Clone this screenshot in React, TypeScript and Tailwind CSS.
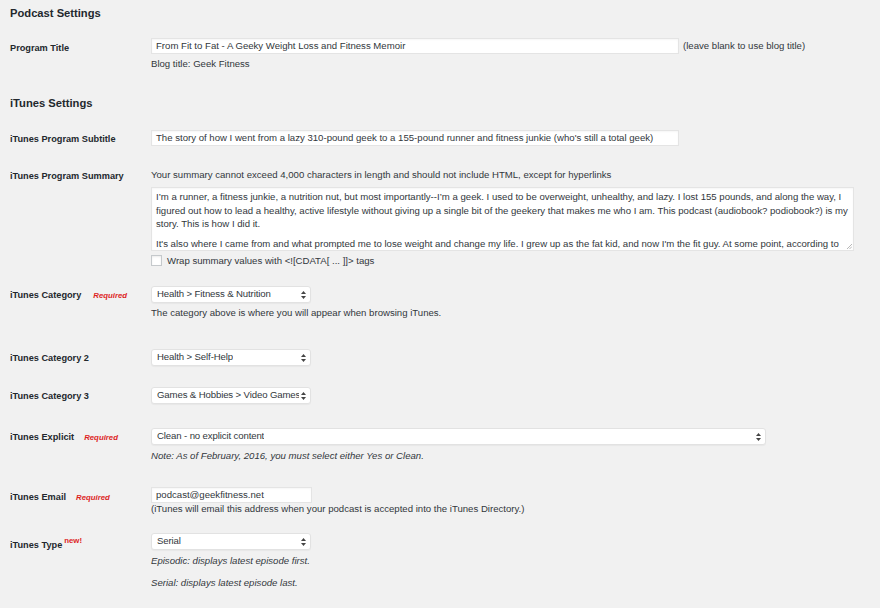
import React from 'react';

const font = { fontFamily: '"Liberation Sans", Arial, sans-serif' };

function Arrows() {
  return (
    <svg width="5" height="8" viewBox="0 0 5 8" className="shrink-0">
      <path d="M2.5 0 L5 3 L0 3 Z" fill="#444" />
      <path d="M2.5 8 L5 5 L0 5 Z" fill="#444" />
    </svg>
  );
}

function Select({ value, width }: { value: string; width: string }) {
  return (
    <div
      className={`${width} h-[17px] bg-white border border-[#e2e2e2] rounded-[3px] shadow-[0_1px_1px_rgba(0,0,0,0.04)] flex items-center justify-between gap-[2px] pl-[5px] pr-[4px] text-[9.6px] tracking-[-0.12px] text-[#32373c]`}
    >
      <span className="whitespace-nowrap overflow-hidden">{value}</span>
      <Arrows />
    </div>
  );
}

function TextInput({ value, width }: { value: string; width: string }) {
  return (
    <div
      className={`${width} h-[16px] bg-white border border-[#e4e4e4] shadow-[inset_0_1px_2px_rgba(0,0,0,0.04)] flex items-center px-[4px] text-[9.6px] text-[#32373c] whitespace-nowrap overflow-hidden`}
    >
      {value}
    </div>
  );
}

function Required() {
  return <span className="text-[#dd1f1f] italic font-bold text-[7.8px]">Required</span>;
}

function Row({
  label,
  extra,
  labelPt,
  mt,
  children,
}: {
  label: string;
  extra?: React.ReactNode;
  labelPt: string;
  mt: string;
  children: React.ReactNode;
}) {
  return (
    <div className={`flex ${mt}`}>
      <div className={`w-[151px] shrink-0 pl-[10px] ${labelPt} text-[9.2px] leading-[12px] font-bold text-[#23282d] flex items-baseline`}>
        <span className="whitespace-nowrap">{label}</span>
        {extra}
      </div>
      <div className="flex flex-col">{children}</div>
    </div>
  );
}

function Help({ children, italic, mt }: { children: React.ReactNode; italic?: boolean; mt?: string }) {
  return (
    <div className={`h-[12px] text-[9.6px] leading-[12px] text-[#32373c] whitespace-nowrap ${italic ? 'italic' : ''} ${mt ?? ''}`}>
      {children}
    </div>
  );
}

export default function App() {
  return (
    <div className="w-[880px] h-[608px] bg-[#f1f1f1] overflow-hidden text-[#23282d]" style={font}>
      <div className="h-[26px] flex items-center pl-[10px] text-[11.2px] font-bold">Podcast Settings</div>

      <Row label="Program Title" labelPt="pt-[4px]" mt="mt-[12px]">
        <div className="flex items-center h-[16px]">
          <TextInput value="From Fit to Fat - A Geeky Weight Loss and Fitness Memoir" width="w-[528px]" />
          <span className="ml-[4px] text-[9.6px] text-[#32373c] whitespace-nowrap">(leave blank to use blog title)</span>
        </div>
        <Help mt="mt-[4px]">Blog title: Geek Fitness</Help>
      </Row>

      <div className="mt-[26px] h-[14px] flex items-center pl-[10px] text-[11.2px] font-bold">iTunes Settings</div>

      <Row label="iTunes Program Subtitle" labelPt="pt-[3px]" mt="mt-[20px]">
        <TextInput
          value="The story of how I went from a lazy 310-pound geek to a 155-pound runner and fitness junkie (who's still a total geek)"
          width="w-[528px]"
        />
      </Row>

      <Row label="iTunes Program Summary" labelPt="pt-[1px]" mt="mt-[23px]">
        <Help>Your summary cannot exceed 4,000 characters in length and should not include HTML, except for hyperlinks</Help>
        <div className="relative mt-[6px] w-[703px] h-[64px] bg-white border border-[#e4e4e4] shadow-[inset_0_1px_2px_rgba(0,0,0,0.04)] overflow-hidden px-[4px] pt-[2px] text-[9.6px] leading-[13.5px] text-[#32373c]">
          <div className="whitespace-nowrap">I’m a runner, a fitness junkie, a nutrition nut, but most importantly--I’m a geek. I used to be overweight, unhealthy, and lazy. I lost 155 pounds, and along the way, I</div>
          <div className="whitespace-nowrap">figured out how to lead a healthy, active lifestyle without giving up a single bit of the geekery that makes me who I am. This podcast (audiobook? podiobook?) is my</div>
          <div className="whitespace-nowrap">story. This is how I did it.</div>
          <div className="h-[6.5px]" />
          <div className="whitespace-nowrap">It's also where I came from and what prompted me to lose weight and change my life. I grew up as the fat kid, and now I'm the fit guy. At some point, according to</div>
          <svg width="6" height="6" viewBox="0 0 6 6" className="absolute right-[1px] bottom-[1px]">
            <path d="M6 1 L1 6 M6 3.5 L3.5 6" stroke="#999" strokeWidth="0.7" />
          </svg>
        </div>
        <div className="mt-[4px] h-[11px] flex items-center">
          <div className="w-[11px] h-[11px] shrink-0 bg-white border border-[#c5c9cc] shadow-[inset_0_1px_2px_rgba(0,0,0,0.08)]" />
          <span className="ml-[5px] text-[9.6px] leading-[11px] text-[#32373c] whitespace-nowrap">{'Wrap summary values with <![CDATA[ ... ]]> tags'}</span>
        </div>
      </Row>

      <Row
        label="iTunes Category"
        extra={<span className="ml-[12px]"><Required /></span>}
        labelPt="pt-[3px]"
        mt="mt-[20px]"
      >
        <Select value="Health > Fitness & Nutrition" width="w-[160px]" />
        <Help mt="mt-[4px]">The category above is where you will appear when browsing iTunes.</Help>
      </Row>

      <Row label="iTunes Category 2" labelPt="pt-[3px]" mt="mt-[30px]">
        <Select value="Health > Self-Help" width="w-[160px]" />
      </Row>

      <Row label="iTunes Category 3" labelPt="pt-[3px]" mt="mt-[21px]">
        <Select value="Games & Hobbies > Video Games" width="w-[160px]" />
      </Row>

      <Row
        label="iTunes Explicit"
        extra={<span className="ml-[10px]"><Required /></span>}
        labelPt="pt-[3px]"
        mt="mt-[24px]"
      >
        <Select value="Clean - no explicit content" width="w-[615px]" />
        <Help italic mt="mt-[5px]">Note: As of February, 2016, you must select either Yes or Clean.</Help>
      </Row>

      <Row
        label="iTunes Email"
        extra={<span className="ml-[10px]"><Required /></span>}
        labelPt="pt-[4px]"
        mt="mt-[25px]"
      >
        <TextInput value="podcast@geekfitness.net" width="w-[161px]" />
        <Help>(iTunes will email this address when your podcast is accepted into the iTunes Directory.)</Help>
      </Row>

      <Row
        label="iTunes Type"
        extra={<span className="ml-[2px] text-[#dd1f1f] font-bold text-[7.8px] relative top-[-5px]">new!</span>}
        labelPt="pt-[6px]"
        mt="mt-[18px]"
      >
        <Select value="Serial" width="w-[160px]" />
        <Help italic mt="mt-[5px]">Episodic: displays latest episode first.</Help>
        <Help italic mt="mt-[10px]">Serial: displays latest episode last.</Help>
      </Row>
    </div>
  );
}
